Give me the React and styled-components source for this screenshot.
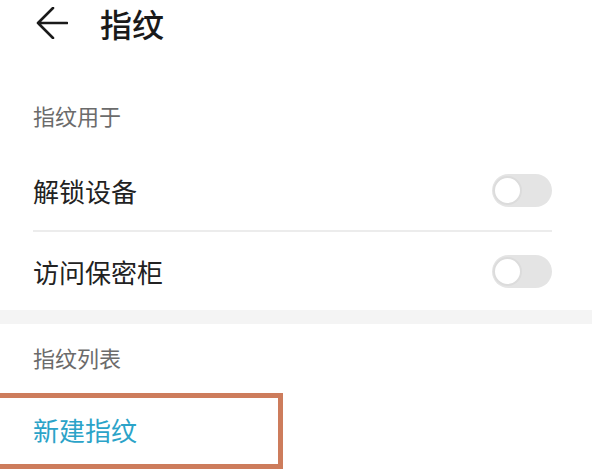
import styled, { createGlobalStyle } from "styled-components";

const GlobalStyle = createGlobalStyle`
  html, body {
    margin: 0;
    padding: 0;
    background: #ffffff;
  }
  body {
    font-family: "Noto Sans CJK SC", "Noto Sans", sans-serif;
    overflow: hidden;
  }
`;

const Page = styled.div`
  width: 592px;
  height: 469px;
  overflow: hidden;
  background: #ffffff;
  display: flex;
  flex-direction: column;
`;

const Header = styled.div`
  display: flex;
  align-items: center;
  height: 46px;
  padding-left: 36px;
  gap: 32px;
`;

const BackButton = styled.button`
  display: flex;
  align-items: center;
  justify-content: center;
  width: 32px;
  height: 32px;
  padding: 0;
  border: none;
  background: transparent;
  color: #1a1a1a;
`;

const Title = styled.h1`
  margin: 0;
  font-size: 32px;
  line-height: 46px;
  font-weight: 500;
  color: #1a1a1a;
`;

const SectionTitle = styled.div`
  padding: ${(props) => props.$top}px 33px ${(props) => props.$bottom}px;
  font-size: 22px;
  line-height: 32px;
  color: #6b6b6b;
`;

const List = styled.div`
  display: flex;
  flex-direction: column;
`;

const Row = styled.div`
  display: flex;
  align-items: center;
  justify-content: space-between;
  height: ${(props) => props.$height}px;
  margin: 0 40px 0 33px;
  border-bottom: ${(props) => (props.$divider ? "2px solid #ececec" : "none")};
`;

const Label = styled.span`
  font-size: 26px;
  color: #222222;
`;

const Track = styled.div`
  display: flex;
  align-items: center;
  width: 60px;
  height: 33px;
  border-radius: 17px;
  background: #e4e4e4;
  box-sizing: border-box;
  padding: 2px;
`;

const Knob = styled.div`
  width: 29px;
  height: 29px;
  border-radius: 50%;
  background: #ffffff;
  border: 2px solid #dcdcdc;
  box-sizing: border-box;
  margin-left: -1px;
`;

const Gap = styled.div`
  height: 14px;
  background: #f4f4f4;
`;

const AddRow = styled.div`
  display: flex;
  align-items: center;
  width: 283px;
  height: 76px;
  box-sizing: border-box;
  border: 5px solid #cd7c5c;
  border-left: none;
  padding: 0 0 3px 33px;
  font-size: 26px;
  color: #2ba3c8;
`;

function Toggle() {
  return (
    <Track>
      <Knob />
    </Track>
  );
}

export default function App() {
  return (
    <Page>
      <GlobalStyle />
      <Header>
        <BackButton>
          <svg width="32" height="32" viewBox="0 0 32 32" fill="none">
            <path
              d="M31 16H2M17 1L2 16l15 15"
              stroke="currentColor"
              strokeWidth="2.6"
              strokeLinecap="round"
              strokeLinejoin="round"
            />
          </svg>
        </BackButton>
        <Title>指纹</Title>
      </Header>
      <SectionTitle $top={53} $bottom={19}>指纹用于</SectionTitle>
      <List>
        <Row $height={80} $divider>
          <Label>解锁设备</Label>
          <Toggle />
        </Row>
        <Row $height={78}>
          <Label>访问保密柜</Label>
          <Toggle />
        </Row>
      </List>
      <Gap />
      <SectionTitle $top={17} $bottom={20}>指纹列表</SectionTitle>
      <AddRow>新建指纹</AddRow>
    </Page>
  );
}
